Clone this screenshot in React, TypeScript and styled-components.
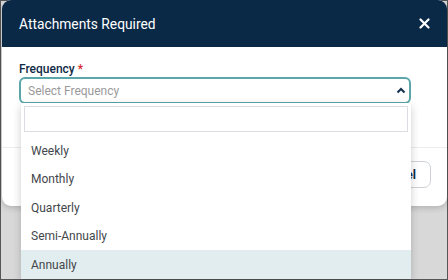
import React from 'react';
import styled, { createGlobalStyle } from 'styled-components';

const GlobalStyle = createGlobalStyle`
  * { box-sizing: border-box; }
  html, body { margin: 0; padding: 0; }
  body {
    width: 448px;
    height: 280px;
    overflow: hidden;
    background: #d8d8d8;
    font-family: Roboto, 'Liberation Sans', sans-serif;
  }
`;

const options = ['Weekly', 'Monthly', 'Quarterly', 'Semi-Annually', 'Annually'];

export default function App() {
  return (
    <>
      <GlobalStyle />
      <Screen>
        <Modal>
          <Header>
            <Title>Attachments Required</Title>
            <CloseButton aria-label="close">
              <svg width="11" height="11" viewBox="0 0 11 11">
                <path d="M1.5 1.5 L9.5 9.5 M9.5 1.5 L1.5 9.5" stroke="#fff" strokeWidth="2.2" strokeLinecap="round" />
              </svg>
            </CloseButton>
          </Header>
          <Body>
            <Label>
              Frequency <Required>*</Required>
            </Label>
            <SelectWrap>
              <SelectBox>
                <Placeholder>Select Frequency</Placeholder>
                <svg width="10" height="7" viewBox="0 0 10 7">
                  <path d="M1.5 5.5 L5 2 L8.5 5.5" stroke="#13304d" strokeWidth="2" fill="none" />
                </svg>
              </SelectBox>
              <Dropdown>
                <Search />
                <List>
                  {options.map((o) => (
                    <Option key={o} active={o === 'Annually'}>
                      {o}
                    </Option>
                  ))}
                </List>
              </Dropdown>
            </SelectWrap>
          </Body>
          <Footer>
            <CancelButton>Cancel</CancelButton>
          </Footer>
        </Modal>
      </Screen>
    </>
  );
}

const Screen = styled.div`
  width: 448px;
  height: 280px;
  border: 1px solid #555;
  padding-left: 1px;
  background: #d8d8d8;
`;

const Modal = styled.div`
  width: 445px;
  margin-top: -1px;
  background: #fff;
  border-radius: 9px;
  box-shadow: 0 2px 6px rgba(0, 0, 0, 0.18);
`;

const Header = styled.div`
  height: 47px;
  display: flex;
  align-items: center;
  justify-content: space-between;
  padding: 0 17px 0 17px;
  background: #0a2947;
  border-radius: 9px 9px 0 0;
`;

const Title = styled.h1`
  margin: 0;
  font-size: 13.8px;
  font-weight: 400;
  color: #fff;
`;

const CloseButton = styled.div`
  display: flex;
`;

const Body = styled.div`
  padding: 15px 36px 0 17px;
  height: 101px;
  border-bottom: 1px solid #ececec;
`;

const Label = styled.div`
  font-size: 12px;
  font-weight: 500;
  color: #0f2a45;
  line-height: 14px;
  margin-bottom: 1px;
`;

const Required = styled.span`
  color: #d6262d;
`;

const SelectWrap = styled.div`
  position: relative;
`;

const SelectBox = styled.div`
  height: 27px;
  display: flex;
  align-items: center;
  justify-content: space-between;
  padding: 0 3px 0 7px;
  border: 2px solid #5aa6a8;
  border-radius: 6px;
`;

const Placeholder = styled.span`
  font-size: 12px;
  color: #9a9a9a;
`;

const Dropdown = styled.div`
  position: absolute;
  top: 26px;
  left: 2px;
  right: 0;
  background: #fff;
  padding: 3px 3px 0 3px;
  box-shadow: 0 3px 8px rgba(0, 0, 0, 0.2);
  border-radius: 0 0 4px 4px;
`;

const Search = styled.div`
  height: 26px;
  border: 1px solid #dcdce2;
  margin-bottom: 4px;
`;

const List = styled.div`
  display: flex;
  flex-direction: column;
  margin: 0 -3px;
`;

const Option = styled.div<{ active?: boolean }>`
  height: 28.5px;
  display: flex;
  align-items: center;
  padding-left: 10px;
  padding-top: 1px;
  font-size: 12px;
  color: #43474b;
  background: ${(p) => (p.active ? '#e2edef' : '#fff')};
`;

const Footer = styled.div`
  height: 58px;
  display: flex;
  align-items: flex-start;
  justify-content: flex-end;
  padding: 13px 16px 0 0;
`;

const CancelButton = styled.div`
  height: 27px;
  padding: 0 14px;
  display: flex;
  align-items: center;
  border: 1px solid #cfd3d7;
  border-radius: 7px;
  font-size: 12px;
  font-weight: 700;
  color: #0f2a45;
`;
